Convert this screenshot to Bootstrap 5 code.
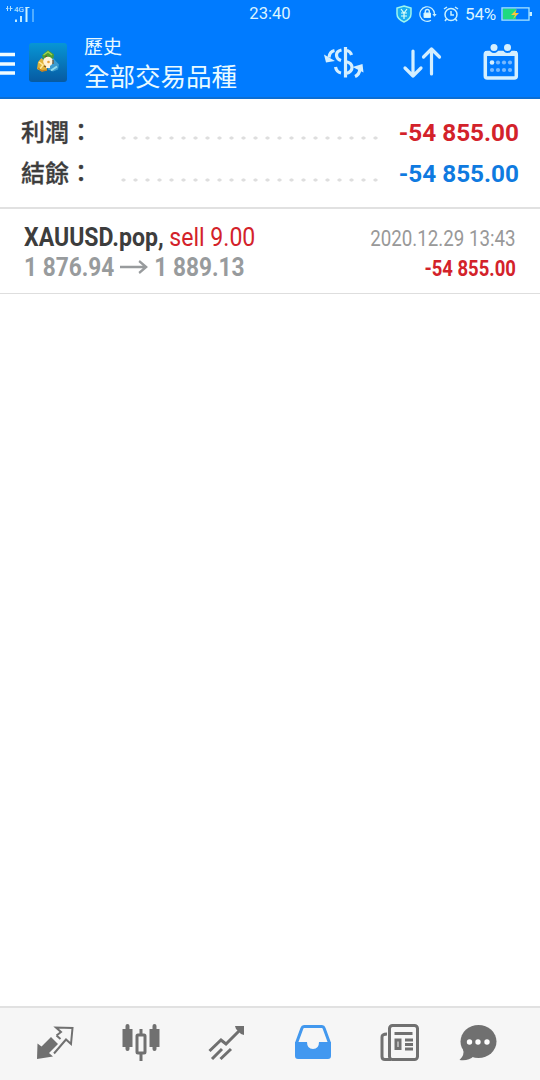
<!DOCTYPE html>
<html lang="zh-Hant">
<head>
<meta charset="utf-8">
<meta name="viewport" content="width=device-width, initial-scale=1">
<title>歷史</title>
<link href="https://cdn.jsdelivr.net/npm/bootstrap@5.3.0/dist/css/bootstrap.min.css" rel="stylesheet">
<script src="https://cdn.jsdelivr.net/npm/bootstrap@5.3.0/dist/js/bootstrap.bundle.min.js" defer></script>
<style>
body{font-family:Roboto,"Noto Sans CJK TC",sans-serif;height:1080px;overflow:hidden;background:#fff}
svg{display:block;flex:none}
.app-top{background:#007bff;height:99px;border-bottom:2px solid #0b6ed4;color:#dcf4ff}
.status{height:28px;font-size:17px;line-height:28px;padding:0 8px 0 5px;position:relative}
.clock{position:absolute;left:0;right:0;text-align:center;font-size:16.600px}
.net{font-size:8px}
.bar{height:69px}
.titles{margin-left:17px;color:#e9faff}
.t-small{font-size:19px;line-height:24px;margin-top:8px}
.t-big{font-size:25.5px;line-height:34px}
.summary{height:110px;border-bottom:2px solid #e1e1e1;padding:13px 21px 0}
.line{height:41.5px}
.lbl{width:100px;font-size:24px;font-weight:500;color:#3d3d3d;white-space:nowrap;-webkit-text-stroke:.3px #3d3d3d}
.dots{width:264px;height:12px;margin-top:11px;background:radial-gradient(ellipse 2.4px 1.9px at 50% 50%,#dedede 70%,transparent) -3.5px 0/12px 12px}
.amt{font-size:24.3px;font-weight:700;white-space:nowrap}
.red{color:#d3222a}.blu{color:#0f7ae0}
.deal{height:85px;border-bottom:1px solid #dedede;padding:13px 24px 0}
.cell{height:30px;line-height:30px;white-space:nowrap}
.cond{display:inline-block;transform-origin:0 50%}
.cond.end{transform-origin:100% 50%}
.sym{font-size:26px;color:#3d3d3d;transform:scaleX(.887)}
.price{font-size:26px;font-weight:700;color:#989b9d;transform:scaleX(.872)}
.date{font-size:22.5px;color:#999;padding-top:1px;transform:scaleX(.833)}
.pl{font-size:22px;font-weight:700;padding-top:2px;transform:scaleX(.84)}
.tabs{height:74px;border-top:2px solid #e1e1e1;background:#f6f6f6;padding:0 12px;color:#707070}
.tabs a{width:86px;color:inherit}
</style>
</head>
<body class="d-flex flex-column">
<header class="app-top">
  <div class="status d-flex align-items-center">
    <div class="clock">23:40</div>
    <svg width="30" height="22" viewBox="0 -2 30 22"><path d="M1 3.500h2.500M2.500 1v5M4.500 3.500h3M5.500 1v5" stroke="#aee0ff" fill="none"/><text class="net" x="9" y="6.500" fill="#cdeeff">4G</text><path d="M20.500 2.500h4" stroke="#c9f2ff"/><path d="M11 14.500v2.500M16 11v6" stroke="#bfeaff" stroke-width="2"/><path d="M21.500 2v15" stroke="#c9f2ff" stroke-width="2"/><path d="M28 4v13" stroke="#6bbcff" stroke-width="1.5"/></svg>
    <svg class="ms-auto" width="16" height="18" viewBox="0 0 16 18"><path d="M8 1l7 2v6q0 5-7 8Q1 14 1 9V3z" fill="#19aef2" stroke="#9df5ee" stroke-width="1.5"/><path d="M5 4l3 4 3-4M8 8v6M5 8h6M5 11h6" stroke="#dffff6" fill="none" stroke-width="1.2"/></svg>
    <svg style="margin-left:7px" width="18" height="18" viewBox="0 0 18 18" fill="none" stroke="#c9f1ff"><path d="M12 15.300A7.300 7.300 0 1 1 15.500 9" stroke-width="1.200"/><path d="M13.300 9h4.400l-2.200 2.800z" fill="#c9f1ff" stroke="none"/><path d="M5 8h6.500v4.500H5z" fill="#dff8ff"/><path d="M6.300 8V6.500a2 2 0 0 1 4 0V8" stroke-width="1.400"/></svg>
    <svg style="margin-left:6px" width="16" height="18" viewBox="0 0 16 18" fill="none" stroke="#c9f1ff" stroke-width="1.500"><circle cx="8" cy="9.500" r="6"/><path d="M8 6v4h3M1 4l3-2M15 4l-3-2M3.500 14L2 16M12.500 14l1.500 2"/></svg>
    <span style="margin-left:6px;letter-spacing:-.2px">54%</span>
    <svg style="margin-left:5px" width="31" height="14" viewBox="0 0 31 14"><path d="M2 1.500h13v11H2z" fill="#1ed982"/><path d="M1 .8h27v12.400H1z" fill="none" stroke="#a9e5ff" stroke-width="1.300"/><path d="M28.500 5H31v4h-2.500z" fill="#c9f1ff"/><path d="M16 2l-6 6h4l-2 4 6-6h-4z" fill="#ffc43a"/></svg>
  </div>
  <div class="bar d-flex">
    <svg width="15" height="69" viewBox="0 0 15 69"><path d="M0 26.500h15M0 36h15M0 45h15" stroke="#effcff" stroke-width="3.500"/></svg>
    <svg style="margin:15px 0 0 14px" width="38" height="40" viewBox="0 0 38 40">
      <defs><linearGradient id="g" x2="0" y2="1"><stop stop-color="#0796d5"/><stop offset="1" stop-color="#075aa2"/></linearGradient></defs>
      <rect width="38" height="39" rx="3" fill="url(#g)"/>
      <path d="M19 7l6 4.500-1 6h-9l-2-5z" fill="#4b9e35"/><path d="M14.500 12l4.500-3 4 3" stroke="#9fd050" stroke-width="1.500" fill="none"/>
      <path d="M12.500 15l5 5 .5 7-5 1.500-5-2.500 1-7z" fill="#e0b238"/><path d="M10 19l4 3-3 4" stroke="#ffe99a" stroke-width="1.500" fill="none"/><path d="M9 25l4 3 5-1" stroke="#c58021" stroke-width="1.500" fill="none"/>
      <path d="M24 15l6 6.500-1 5-5 2-5-2-1-5z" fill="#3b9bd0"/><path d="M22 27.500l6-4" stroke="#91ddf0" stroke-width="2"/>
      <circle cx="19" cy="18.500" r="4.800" fill="#fff2d8"/><path d="M17 21h4v4h-4z" fill="#fff2d8"/><circle cx="19.500" cy="19" r="1.300" fill="#e8a23c"/>
      <path d="M16 14l2-1M15 23l2 1M24 17v4" stroke="#765128" stroke-width="1.200"/>
    </svg>
    <div class="titles"><div class="t-small">歷史</div><div class="t-big">全部交易品種</div></div>
    <div class="ms-auto d-flex" style="padding:15px 21px 0 0">
      <svg width="40" height="40" viewBox="0 0 40 40" fill="none" stroke="#d4efff" stroke-width="3.200"><path d="M21.500 4v30.500M22 7.500q4.500.5 5.500 4.500M17.500 7q-5 1-5 5t4.500 5.500M22 18.500q6 1.500 6 6t-6 6M11.500 24q1 5 5.500 6"/><path d="M10.500 7.500q-5 1-5.500 7M31 33.500q4.500-2 5-8"/><path d="M0 11.500l11 6.500-9 1.500zM39.500 29.500L28.500 24l10-3z" fill="#d4efff" stroke="none"/></svg>
      <svg style="margin-left:38px" width="40" height="40" viewBox="0 0 40 40" fill="none" stroke="#d4efff" stroke-width="3.200" stroke-linecap="round" stroke-linejoin="round"><path d="M11 8v25M3 25l8 8 8-8M29.500 31V6M21.500 14l8-8 8 8"/></svg>
      <svg style="margin-left:41px" width="36" height="40" viewBox="0 0 36 40"><rect x="2.300" y="9.500" width="31" height="25.500" rx="2" fill="none" stroke="#d4efff" stroke-width="3.500"/><path d="M2 8h32v5H2z" fill="#d4efff"/><circle cx="11" cy="5.500" r="4.600" fill="#007bff"/><circle cx="24.500" cy="5.500" r="4.600" fill="#007bff"/><g fill="#d4efff"><circle cx="11" cy="4.500" r="3.500"/><circle cx="24.500" cy="4.500" r="3.500"/><circle cx="9" cy="19.500" r="2.300"/></g><g fill="#77b9ff"><circle cx="15" cy="19.500" r="2.100"/><circle cx="21" cy="19.500" r="2.100"/><circle cx="27" cy="19.500" r="2.100"/><circle cx="9" cy="27" r="2.100"/><circle cx="15" cy="27" r="2.100"/><circle cx="21" cy="27" r="2.100"/><circle cx="27" cy="27" r="2.100"/></g></svg>
    </div>
  </div>
</header>
<main class="flex-grow-1">
  <section class="summary">
    <div class="line d-flex align-items-center"><span class="lbl">利潤：</span><span class="dots"></span><span class="amt red ms-auto">-54 855.00</span></div>
    <div class="line d-flex align-items-center"><span class="lbl">結餘：</span><span class="dots"></span><span class="amt blu ms-auto">-54 855.00</span></div>
  </section>
  <section class="deal">
    <div class="d-flex justify-content-between cell"><span class="cond sym"><b>XAUUSD.pop,</b> <span class="red">sell 9.00</span></span><span class="cond end date">2020.12.29 13:43</span></div>
    <div class="d-flex justify-content-between cell"><span class="cond price">1 876.94 <svg class="d-inline-block" width="33" height="26" viewBox="0 0 33 26" fill="none" stroke="#989b9d" stroke-width="2.600"><path d="M0 11h30M22 5l8 6-8 6"/></svg> 1 889.13</span><span class="cond end pl red">-54 855.00</span></div>
  </section>
</main>
<nav class="tabs d-flex">
  <a class="d-flex justify-content-center" href="#"><svg style="margin-top:14px" width="40" height="40" viewBox="0 0 40 40"><path d="M2 37l.5-15.500 4 3L16 15l7 7-9 9 4 3.500z" fill="currentColor"/><path d="M21.500 13.500l4.500-3.500-5-4.500L37.500 6 36 22l-5-4.500-12 14M21.500 13.500l4 3.500" fill="none" stroke="currentColor" stroke-width="2"/></svg></a>
  <a class="d-flex justify-content-center" href="#"><svg style="margin-top:14px" width="40" height="40" viewBox="0 0 40 40"><path d="M1.500 7h10v18h-10zM28.500 7h10v18h-10z" fill="currentColor"/><path d="M6.500 4v23M33.500 4v23" stroke="currentColor" stroke-width="4" stroke-linecap="round"/><path d="M20 7v6M20 31v8" stroke="currentColor" stroke-width="3"/><rect x="16" y="13" width="8" height="18" rx="1" fill="#f6f6f6" stroke="currentColor" stroke-width="3"/></svg></a>
  <a class="d-flex justify-content-center" href="#"><svg style="margin-top:14px" width="40" height="40" viewBox="0 0 40 40" fill="none" stroke="currentColor" stroke-width="3"><path d="M2.500 29L14 18l5 4L34.500 6.500M5 37l10-10M13.500 37l10.500-10"/><path d="M28 4h9v9l-3-1-5-5z" fill="currentColor" stroke="none"/></svg></a>
  <a class="d-flex justify-content-center" href="#"><svg style="margin-top:14px" width="40" height="40" viewBox="0 0 40 40"><path d="M3.500 21L9 6q.5-1.500 2-1.500h18q1.500 0 2 1.500l5.500 15" fill="#f6f6f6" stroke="#4298ee" stroke-width="3"/><path d="M2 20h12q0 7 6 7t6-7h12v14q0 3-3 3H5q-3 0-3-3z" fill="#4298f0"/></svg></a>
  <a class="d-flex justify-content-center" href="#"><svg style="margin-top:14px" width="40" height="40" viewBox="0 0 40 40" fill="none" stroke="currentColor" stroke-width="3"><rect x="10.500" y="3.500" width="28" height="34" rx="3"/><path d="M12 37.500H6q-3 0-3-3V15q0-3 5-3"/><path d="M15.500 11.500h18M26 18h8M26 22.500h8M26 27h8"/><path d="M17 18h4v8.500h-4z"/></svg></a>
  <a class="d-flex justify-content-center" href="#" style="margin-left:-7px"><svg style="margin-top:14px" width="40" height="40" viewBox="0 0 40 40"><ellipse cx="20.500" cy="19.500" rx="18" ry="16.500" fill="currentColor"/><path d="M5 27q2 6-3.500 11Q10 39.500 16 34z" fill="currentColor"/><g fill="#fff"><circle cx="11.500" cy="20" r="2.700"/><circle cx="20" cy="20" r="2.700"/><circle cx="29" cy="20" r="2.700"/></g></svg></a>
</nav>
</body>
</html>
